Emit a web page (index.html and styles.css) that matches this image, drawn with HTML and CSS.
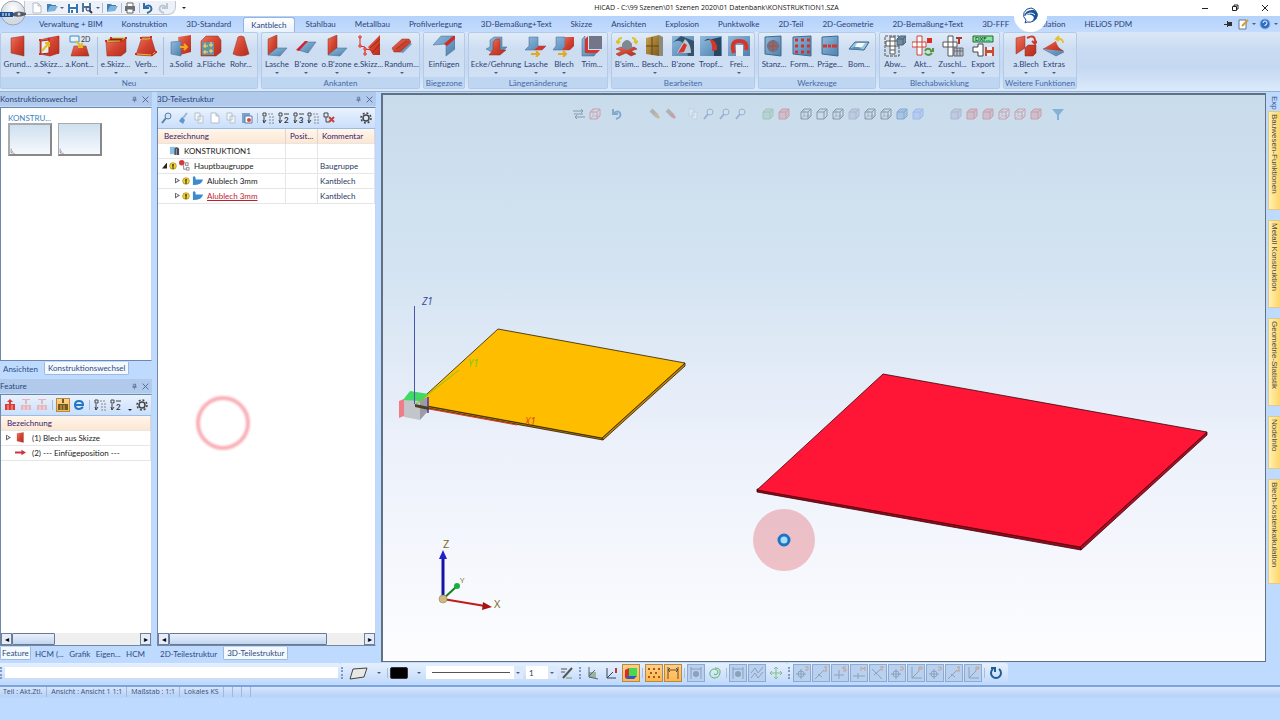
FILE: index.html
```html
<!DOCTYPE html>
<html lang="de">
<head>
<meta charset="utf-8">
<title>HiCAD - C:\99 Szenen\01 Szenen 2020\01 Datenbank\KONSTRUKTION1.SZA</title>
<link rel="stylesheet" href="styles.css">
</head>
<body>
<svg class="defs" aria-hidden="true">
<defs>
<linearGradient id="r" x1="0" y1="0" x2="1" y2="1"><stop offset="0" stop-color="#ee7460"/><stop offset=".5" stop-color="#d24430"/><stop offset="1" stop-color="#b42c1e"/></linearGradient>
<linearGradient id="b" x1="0" y1="0" x2="1" y2="1"><stop offset="0" stop-color="#90bade"/><stop offset="1" stop-color="#4c80ac"/></linearGradient>
<linearGradient id="y" x1="0" y1="0" x2="1" y2="1"><stop offset="0" stop-color="#c9a24c"/><stop offset="1" stop-color="#7d5a1c"/></linearGradient>
</defs>
<symbol id="sheet" viewBox="0 0 22 22"><path fill="url(#r)" stroke="#8d3024" stroke-width=".5" d="M4 3 17 1v20L4 18z"/></symbol>
<symbol id="sketch" viewBox="0 0 22 22"><path fill="url(#r)" stroke="#9c2a1c" stroke-width=".6" d="M2 5 10 3 21 1v17l-9 3-10-2z"/><path fill="#e8edf5" stroke="#a5281a" d="M3 6 11 5v13l-8 1z"/><path stroke="#e3bb23" stroke-width="2" fill="none" d="m4 16 7-8m-4 0h4v4"/><g fill="#e02418"><path d="M1 4h2v2H1zM10 3h2v2h-2zM19 1h2v2h-2zM1 18h2v2H1zM11 19h2v2h-2zM19 17h2v2h-2z"/></g></symbol>
<symbol id="box" viewBox="0 0 22 22"><path fill="#8c2418" d="m1 6 5-3h15l-2 4z"/><path fill="url(#r)" stroke="#8d3024" stroke-width=".5" d="M1 7h15l5-3v13l-5 4H2z"/><path fill="none" stroke="#e3bb23" d="M2 6h14l4-3H6z"/><g fill="#e02418"><path d="M0 5h2v2H0zM5 2h2v2H5zM15 5h2v2h-2zM20 2h2v2h-2z"/></g></symbol>
<symbol id="verb" viewBox="0 0 22 22"><path fill="url(#r)" stroke="#8d3024" stroke-width=".5" d="M7 2h9l5 16-4 3-16-1z"/><path fill="none" stroke="#e3bb23" d="M6 4h8l2-2M2 19l15 1 3-3"/><g fill="#e02418"><path d="M5 2h2v2H5zM15 1h2v2h-2zM0 18h2v2H0zM16 19h2v2h-2zM20 16h2v2h-2z"/></g></symbol>
<symbol id="solid" viewBox="0 0 22 22"><path fill="url(#r)" d="M8 2 21 0v17L10 20z"/><path fill="url(#b)" stroke="#3c6488" stroke-width=".5" d="M1 7 11 6v15L1 19z"/><path stroke="#f0a920" stroke-width="2" fill="none" d="M10 12h6m-2-3 3 3-3 3"/></symbol>
<symbol id="flaeche" viewBox="0 0 22 22"><path fill="url(#r)" stroke="#8d3024" stroke-width=".5" d="M1 6 6 1h12l3 4v12l-5 4H1z"/><path fill="#6893a4" d="M2 7h12v13H2z"/><path stroke="#ffe24a" fill="none" d="M5 8v5M3 11h5m3-4v5M9 10h4m-8 5v4m-2-2h5m3-3v4m-2-2h4"/></symbol>
<symbol id="cone" viewBox="0 0 22 22"><path fill="url(#r)" stroke="#8d3024" stroke-width=".5" d="M8 2q3-2 6 0l5 17q-8 4-16 0z"/></symbol>
<symbol id="lasche" viewBox="0 0 22 22"><path fill="url(#r)" stroke="#8d3024" stroke-width=".5" d="M2 4 11 0v13L2 20z"/><path fill="url(#b)" stroke="#41698c" stroke-width=".5" d="m2 20 9-7h10l-7 8z"/></symbol>
<symbol id="bzone" viewBox="0 0 22 22"><path fill="url(#b)" stroke="#41698c" stroke-width=".5" d="M3 15 11 7h10l-8 11z"/><path fill="#d51f2c" d="M1 15 10 6h3l-9 10z"/></symbol>
<symbol id="eskizz" viewBox="0 0 22 22"><path fill="url(#r)" d="M10 12 22 0v20h-7z"/><path stroke="#8f1c10" stroke-width=".8" d="m12 13 10-9M14 18 22 9"/><path fill="none" stroke="#e02418" d="M2 3v8l5 1v7m0-5 7 1"/><g fill="#fff" stroke="#e02418"><path d="M1 1h2v2H1zM1 10h2v2H1zM6 13h2v2H6zM6 18h2v2H6z"/></g></symbol>
<symbol id="rand" viewBox="0 0 22 22"><path fill="url(#b)" d="M8 17 18 7l3 2-9 9z"/><path fill="url(#r)" stroke="#8d3024" stroke-width=".5" d="M1 13 11 4h7l2 3-11 10H3z"/><path stroke="#8d3024" stroke-width=".8" d="m5 14 11-8"/></symbol>
<symbol id="einf" viewBox="0 0 22 22"><path fill="url(#b)" stroke="#41698c" stroke-width=".5" d="M0 10 8 1h14v13l-9 7V9z"/><path fill="#cf2d28" d="m11 9 9-8h2v3l-8 7z"/></symbol>
<symbol id="ecke" viewBox="0 0 22 22"><path fill="url(#b)" stroke="#41698c" stroke-width=".5" d="M5 5 9 2h8v10h5l-9 8L1 14l4-2z"/><path fill="url(#r)" stroke="#8d3024" stroke-width=".5" d="M8 7l3-3h4v11h6l-6 5H4l4-5z"/></symbol>
<symbol id="lasch2" viewBox="0 0 22 22"><path fill="url(#b)" stroke="#41698c" stroke-width=".5" d="M4 2h9v9h8l-4 4H0l4-4z"/><path fill="#d93429" d="M14 11h7l-4 4h-8z"/><path fill="none" stroke="#e3a91d" stroke-width="2" d="M6 19h8m-3-3 3 3-3 3"/></symbol>
<symbol id="blech2" viewBox="0 0 22 22"><path fill="url(#b)" stroke="#41698c" stroke-width=".5" d="M3 2h9v9h8l-4 4H0l3-4z"/><path fill="url(#r)" d="M12 2h9v9l-4 4H9l3-4z"/><path fill="none" stroke="#e3a91d" stroke-width="2" d="M5 19h8m-3-3 3 3-3 3"/></symbol>
<symbol id="trim" viewBox="0 0 22 22"><path fill="#75758a" d="M8 1h13v13H8z"/><path fill="url(#b)" stroke="#41698c" stroke-width=".5" d="M1 4 4 1v16h12l-3 4H1z"/><path fill="#d93429" d="m4 4 3-3v14h12l-3 3H4z"/></symbol>
<symbol id="bsim" viewBox="0 0 22 22"><path fill="url(#r)" stroke="#8d3024" stroke-width=".5" d="m0 14 5-2 5 2 8-2 3 2-6 2 5 3-5 2-5-3-7 3-3-2 6-3z"/><path fill="#7d8892" d="M6 9q5-8 10 0v4l-5 2-5-2z"/><path fill="none" stroke="#dbc225" stroke-width="2" d="M6 3Q2 3 2 8M0 6l2 2 2-2m12-3q4 0 4 5m-2-2 2 2 2-2"/></symbol>
<symbol id="besch" viewBox="0 0 22 22"><path fill="url(#y)" d="M2 3 15 0v21L2 19z"/><path fill="#8d897b" d="m15 0 4 2v19h-4z"/><path stroke="#67450f" d="M2 11h13M8 2v18"/></symbol>
<symbol id="bz2" viewBox="0 0 22 22"><path fill="url(#b)" d="M0 1h22v20H0z"/><path fill="#31536e" d="M0 8q12-8 16 13h6V6L9 1z"/><path fill="#bac9d3" d="M5 18 13 4q6 5 6 14z"/><path fill="#d93429" d="m6 18 6-10 3 2-3 7z"/></symbol>
<symbol id="tropf" viewBox="0 0 22 22"><path fill="url(#b)" d="M0 1h22v20H0z"/><path fill="#29475f" d="M4 6q7-6 10 4v11h7V2z"/><path fill="#d93429" d="M9 4q9 1 8 11l-5 1q1-7-3-12z"/></symbol>
<symbol id="frei" viewBox="0 0 22 22"><path fill="url(#b)" d="M0 1h22v20H0z"/><path fill="#e9eef3" d="M8 10h7v11H8z"/><path fill="none" stroke="#d93429" stroke-width="4" d="M6 18Q2 6 11 6t7 9"/></symbol>
<symbol id="stanz" viewBox="0 0 22 22"><path fill="url(#b)" stroke="#406b91" d="M2 2 18 1v20L2 19z"/><circle cx="10" cy="11" r="6" fill="#77707d"/><path stroke="#b44c49" d="M4 11h12M10 5v12"/></symbol>
<symbol id="form" viewBox="0 0 22 22"><path fill="url(#b)" stroke="#406b91" d="M2 2 20 1v20L2 19z"/><path stroke="#cf342c" stroke-width="3" stroke-dasharray="3 3" d="M4 5h15M4 11h15M4 17h15"/></symbol>
<symbol id="prae" viewBox="0 0 22 22"><path fill="url(#b)" stroke="#406b91" d="M3 2 19 1v20L3 19z"/><path stroke="#d93429" stroke-width="3" d="M4 11h4m1 0h3m1 0h5"/></symbol>
<symbol id="bom" viewBox="0 0 22 22"><path fill="#9cc6e2" stroke="#35617f" d="m1 14 6-7h14l-5 8z"/><path fill="#5b91b9" d="m1 14 7-3 8 4z"/><path fill="#f2faff" d="M9 8h8l-3 4H7z"/></symbol>
<symbol id="abw" viewBox="0 0 22 22"><path fill="none" stroke="#555" stroke-dasharray="3 1" d="M1 1h14v20H1z"/><path fill="#fff" stroke="#555" d="M6 2h5v4h4v5h-4v8H6v-8H2V6h4zM6 6h5v5H6zm0 9h5"/><path fill="#718ca1" stroke="#48657b" d="m13 4 3-3h6v6l-3 3h-6zm0 0h6v6m0-6 3-3"/></symbol>
<symbol id="akt" viewBox="0 0 22 22"><path fill="#fff" stroke="#ce4039" d="M5 1h5v6h4v5h-4v8H5v-8H0V7h5zM5 7h5v5H5z"/><path fill="#e02c20" d="M15 3h5v5h-5z"/><path fill="none" stroke="#57963c" stroke-width="2" d="M13 16q2-4 6-1m2-2v3h-3m2 2q-4 4-7 0"/></symbol>
<symbol id="zu" viewBox="0 0 22 22"><path fill="#fff" stroke="#555" d="M6 1h5v6h4v5h-4v9H6v-9H1V7h5zM6 7h5v5H6z"/><path stroke="#af3430" stroke-width="2" d="M14 3h6m-3 0v6"/><path fill="#b9c2c6" stroke="#667" d="M12 13h9v8h-9zm0 3h9m-6-3v8m3-8v8"/></symbol>
<symbol id="ablech" viewBox="0 0 22 22"><path fill="url(#r)" stroke="#8d3024" stroke-width=".5" d="M1 3 10 1v12l-9 6zM10 13l3-3h8v8l-3 3h-8z"/><path fill="none" stroke="#cf3d2c" stroke-width="2" d="M12 3q8-4 8 3v2m-3-2 3 3 2-3"/></symbol>
<symbol id="extras" viewBox="0 0 22 22"><path fill="url(#b)" stroke="#41698c" stroke-width=".5" d="m0 14 13 7 8-4-11-7z"/><path fill="url(#r)" d="m0 14 13-8q1 7 8 10-11-1-21-2z"/><path fill="none" stroke="#e5c22d" stroke-width="2" d="M20 8q0-5-6-4m2-3-3 3 3 2"/></symbol>
<symbol id="new" viewBox="0 0 12 12"><path fill="#fff" stroke="#b3bcc9" d="M2 1h5l3 3v7H2zM7 1v3h3"/></symbol>
<symbol id="open" viewBox="0 0 12 12"><path fill="#3f7fb8" d="M1 10V2h4l1 1h4v2z"/><path fill="#7db2dd" d="m1 10 3-6h8L9 9z"/></symbol>
<symbol id="save" viewBox="0 0 12 12"><path fill="#3576b5" d="M1 2h10v9H1z"/><path fill="#fff" d="M3 2h6v3H3zm0 5h6v4H3z"/><path fill="#3576b5" d="M4 8h2v3H4z"/></symbol>
<symbol id="savef" viewBox="0 0 12 12"><path fill="#4a7a9c" d="M1 1h9v9H1z"/><path fill="#fff" d="M3 1h5v3H3zm0 5h5v4H3z"/><circle cx="7" cy="7" r="2" fill="#cfe8f6" stroke="#335"/><path stroke="#335" stroke-width="2" d="m9 9 2 2"/></symbol>
<symbol id="print" viewBox="0 0 12 12"><path fill="#fff" stroke="#666" d="M3 1h6v4H3z"/><path fill="#6b7179" d="M1 4h10v5H1z"/><path fill="#fff" stroke="#666" d="M3 7h6v4H3z"/></symbol>
<symbol id="undo" viewBox="0 0 12 12"><path fill="none" stroke="#2c6da6" stroke-width="2" d="M5 11q6-2 4-6-2-3-6 0M2 1v5h5"/></symbol>
<symbol id="redo" viewBox="0 0 12 12"><path fill="none" stroke="#b9c7d6" stroke-width="2" d="M7 11Q1 9 3 5q2-3 6 0m1-4v5H5"/></symbol>
<symbol id="pin" viewBox="0 0 12 12"><path fill="none" stroke="#47628f" d="M4 2h4v5H4zM7 2v5M2 7h8M6 7v4"/></symbol>
<symbol id="x" viewBox="0 0 12 12"><path stroke="#47628f" stroke-width="1.500" fill="none" d="m1 1 10 10m0-10L1 11"/></symbol>
<symbol id="gear" viewBox="0 0 12 12"><circle cx="6" cy="6" r="3" fill="none" stroke="#444" stroke-width="1.500"/><circle cx="6" cy="6" r="5" fill="none" stroke="#444" stroke-width="1.500" stroke-dasharray="2 1.900"/></symbol>
<symbol id="lens" viewBox="0 0 12 12"><circle cx="7" cy="4" r="3" fill="#cfe2f6" stroke="#5b7ea6"/><path stroke="#5b7ea6" stroke-width="2" d="M5 6 1 11"/></symbol>
<symbol id="brush" viewBox="0 0 12 12"><path stroke="#9db6cf" stroke-width="2" d="m10 1-4 5"/><path fill="#5b98cf" d="m5 5 3 3-2 4-4-3z"/></symbol>
<symbol id="copy" viewBox="0 0 12 12"><path fill="#f4f7fa" stroke="#b6c1cf" d="M2 1h5v7H2zM5 4h5v7H5z"/></symbol>
<symbol id="paste" viewBox="0 0 12 12"><path fill="#7ba3cf" d="M1 1h8v10H1z"/><path fill="#fff" stroke="#6078a0" d="M4 4h7v7H4z"/><circle cx="8" cy="8" r="2" fill="#d14c3e"/></symbol>
<symbol id="tree" viewBox="0 0 12 12"><path fill="none" stroke="#444" d="M1 1h3v3H1zM2 5v6m-1-3 1 3 2-3"/><path stroke="#888" stroke-dasharray="2 1" d="M6 2h5M7 5h5M7 8h5M7 11h5"/></symbol>
<symbol id="treen" viewBox="0 0 12 12"><path fill="none" stroke="#444" d="M1 1h3v3H1zM2 5v6m-1-3 1 3 2-3M6 2h5"/></symbol>
<symbol id="treex" viewBox="0 0 12 12"><path fill="none" stroke="#444" d="M1 1h4v4H1zM3 5v5h3"/><path stroke="#c8423a" stroke-width="2" d="m6 5 5 5m0-5-5 5"/></symbol>
<symbol id="konst" viewBox="0 0 12 12"><path fill="#8ec0e6" d="M1 2h6v8H1z"/><path fill="#434a52" d="M6 4q2-3 5 0v7H6z"/><path stroke="#aab" d="M8 4v7"/></symbol>
<symbol id="warn" viewBox="0 0 12 12"><circle cx="6" cy="6" r="5" fill="#f2d22c" stroke="#a58a17"/><path stroke="#222" stroke-width="2" d="M6 3v4m0 1v2"/></symbol>
<symbol id="asm" viewBox="0 0 12 12"><circle cx="3" cy="3" r="3" fill="#d33a3c"/><path fill="#f4f4f4" stroke="#888" d="M7 3h3v3H7zM8 8h3v3H8zM5 5v5h3"/></symbol>
<symbol id="part" viewBox="0 0 12 12"><path fill="#3d8ad0" d="M1 2q3-2 3 3l8 0q-1 6-11 6z"/></symbol>
<symbol id="ins" viewBox="0 0 12 12"><path fill="#dd3b34" d="M1 5h10v6H1zM5 1h2v4H5z"/><path fill="#dd3b34" d="m3 3 3-3 3 3z"/><path stroke="#fff" stroke-width=".6" d="M4 6v5m4-5v5"/></symbol>
<symbol id="insd" viewBox="0 0 12 12"><path fill="#e6b6bd" d="M1 6h10v5H1zM5 0h2v5H5zM2 0h8v1H2z"/><path stroke="#fff" stroke-width=".6" d="M4 7v4m4-4v4"/></symbol>
<symbol id="insk" viewBox="0 0 12 12"><path fill="#6f5a22" d="M1 5h10v6H1zM5 0h2v4H5z"/><path stroke="#d9b450" d="M4 6v5m3-5v5"/></symbol>
<symbol id="ie" viewBox="0 0 12 12"><path fill="none" stroke="#2475c4" stroke-width="2" d="M2 6h8q0-4-4-4T2 6q0 4 4 4 2 0 4-2"/></symbol>
<symbol id="arrow" viewBox="0 0 12 12"><path fill="#cf3440" d="M0 5h7V3l5 3-5 3V7H0z"/></symbol>
<symbol id="cube" viewBox="0 0 12 12"><path fill="none" stroke="currentColor" d="M1 4h7v7H1zM1 4l3-3h7L8 4M8 11l3-3V1"/></symbol>
<symbol id="cubew" viewBox="0 0 12 12"><path fill="none" stroke="currentColor" d="M1 4h7v7H1zM1 4l3-3h7L8 4M8 11l3-3V1"/><path fill="none" stroke="currentColor" stroke-width=".6" d="M4 1v7l-3 3m3-3h7"/></symbol>
<symbol id="cubef" viewBox="0 0 12 12"><path fill="currentColor" fill-opacity=".45" stroke="currentColor" d="m1 4 3-3h7v7l-3 3H1zM1 4h7v7M8 4l3-3"/></symbol>
<symbol id="swap" viewBox="0 0 12 12"><path fill="none" stroke="currentColor" d="M0 3h10M8 1l2 2-2 2M12 9H2m2-2L2 9l2 2M1 6h9"/></symbol>
<symbol id="pen" viewBox="0 0 12 12"><path stroke="#8c8074" stroke-width="4" d="m2 2 6 6"/><path stroke="currentColor" stroke-width="3" d="m6 6 4 4"/></symbol>
<symbol id="funnel" viewBox="0 0 12 12"><path fill="#2f7ec0" d="M0 1h12L7 7v5H5V7z"/></symbol>
<symbol id="tgt" viewBox="0 0 14 14"><path fill="none" stroke="currentColor" d="M1 8h10M6 3v10"/><circle cx="6" cy="8" r="3" fill="none" stroke="currentColor"/><path stroke="#c3a08f" fill="none" d="M10 1h3v3h-3"/></symbol>
<symbol id="move" viewBox="0 0 14 14"><path fill="none" stroke="currentColor" d="M1 7h12M7 1v12M3 5 1 7l2 2m8-4 2 2-2 2M5 3l2-2 2 2m-4 8 2 2 2-2"/></symbol>
<symbol id="diag" viewBox="0 0 14 14"><path fill="none" stroke="currentColor" d="m1 13 9-9M4 8l4 3"/><path stroke="#c3a08f" fill="none" d="M10 1h3m-1 0v4m-2 0h3"/></symbol>
<symbol id="diag2" viewBox="0 0 14 14"><path fill="none" stroke="currentColor" d="m1 3 10 10M3 9l7-6"/><path stroke="#c3a08f" fill="none" d="M9 1h4m-2 0v4"/></symbol>
<symbol id="plus" viewBox="0 0 14 14"><path fill="none" stroke="currentColor" d="M1 9h10M6 4v9"/><path stroke="#c3a08f" fill="none" d="M13 1h-3v2h3v2h-3"/></symbol>
<symbol id="mid" viewBox="0 0 14 14"><path fill="none" stroke="currentColor" d="M1 10h12M6 7v6"/><path stroke="#c3a08f" fill="none" d="M9 5V1l2 2 2-2v4"/></symbol>
<symbol id="axis" viewBox="0 0 14 14"><path fill="none" stroke="currentColor" d="M3 1v11h10M3 12l7-7"/><path stroke="#c3a08f" fill="none" d="M10 5V1h3v2h-3"/></symbol>
<symbol id="zig" viewBox="0 0 14 14"><path fill="none" stroke="currentColor" d="m1 7 4-5 3 5 5-6M1 12l4-5 3 5 5-6"/></symbol>
<symbol id="dim" viewBox="0 0 14 14"><path fill="none" stroke="currentColor" d="M2 1v12M12 1v12M2 4h10M4 2 2 4l2 2m6-4 2 2-2 2"/></symbol>
<symbol id="dimc" viewBox="0 0 14 14"><path fill="none" stroke="currentColor" d="M2 1v12M12 1v12M2 3h10"/><circle cx="7" cy="8" r="3" fill="currentColor"/></symbol>
<symbol id="swirl" viewBox="0 0 14 14"><path fill="none" stroke="#62b36c" d="M7 2q6 0 5 5-1 5-6 5-5-1-4-6 2-4 5-3 4 1 3 4-2 3-4 1"/></symbol>
<symbol id="triad" viewBox="0 0 10 10"><path stroke="#3a62c8" d="M2 1v7"/><path stroke="#c85a4a" d="m2 8 6 1"/><path stroke="#4fae5a" d="m2 8 3-3"/></symbol>
</svg>

<header class="titlebar">
  <div class="quick">
    <button aria-label="Neu"><svg><use href="#new"/></svg></button>
    <button aria-label="Öffnen"><svg><use href="#open"/></svg></button><i class="dd"></i>
    <button aria-label="Speichern"><svg><use href="#save"/></svg></button>
    <button aria-label="Speichern unter"><svg><use href="#savef"/></svg></button><i class="dd"></i>
    <i class="vsep"></i>
    <button aria-label="Ordner"><svg><use href="#open"/></svg></button>
    <i class="vsep"></i>
    <button aria-label="Drucken"><svg><use href="#print"/></svg></button>
    <i class="vsep"></i>
    <button aria-label="Rückgängig"><svg><use href="#undo"/></svg></button>
    <button aria-label="Wiederholen"><svg><use href="#redo"/></svg></button>
  </div>
  <i class="dd more"></i>
  <h1>HiCAD - C:\99 Szenen\01 Szenen 2020\01 Datenbank\KONSTRUKTION1.SZA</h1>
  <div class="winbtns">
    <button aria-label="Minimieren"><svg viewBox="0 0 12 12"><path stroke="#222" d="M3 6.500h6"/></svg></button>
    <button aria-label="Wiederherstellen"><svg viewBox="0 0 12 12"><path fill="none" stroke="#222" d="M3.500 4.500h4v4h-4zM5 4V3h4v4H8"/></svg></button>
    <button aria-label="Schließen"><svg viewBox="0 0 12 12"><path stroke="#222" d="m3 3 6 6m0-6-6 6"/></svg></button>
  </div>
</header>
<button class="orb" aria-label="HiCAD Menü"><svg viewBox="0 0 30 28"><defs><radialGradient id="orbg" cy=".3"><stop offset="0" stop-color="#fff"/><stop offset="1" stop-color="#d5dae2"/></radialGradient></defs><circle cx="13" cy="13" r="12" fill="url(#orbg)" stroke="#9aa5b5"/><path fill="#1d4f95" d="M0 12h13v5H0z"/><path stroke="#fff" d="M3 13v3m3-3v3m3-3v3"/><path fill="#555c66" d="M13 13q5-3 13 0v2q-7 3-13 1z"/><circle cx="19" cy="14" r="1.500" fill="#ddd"/></svg></button>
<div class="bubble"><svg viewBox="0 0 18 18"><path fill="#fff" stroke="#1a4b8c" d="M9 1a8 7 0 1 1-4 14l-2 1 1-3A8 7 0 0 1 9 1z"/><path fill="#19529b" d="M2 9q2-7 10-6 5 3 3 7-1 3-5 4 3-3 1-5-3-3-9 0z"/><path stroke="#fff" fill="none" d="M4 8q5-4 9 0"/></svg></div>

<nav class="tabs">
  <div class="tablist">
  <button>Verwaltung + BIM</button><button>Konstruktion</button><button>3D-Standard</button><button class="on">Kantblech</button><button>Stahlbau</button><button>Metallbau</button><button>Profilverlegung</button><button>3D-Bemaßung+Text</button><button>Skizze</button><button>Ansichten</button><button>Explosion</button><button>Punktwolke</button><button>2D-Teil</button><button>2D-Geometrie</button><button>2D-Bemaßung+Text</button><button>3D-FFF</button><button>Simulation</button><button>HELiOS PDM</button>
  </div>
  <div class="tabtools">
    <button aria-label="Anheften"><svg viewBox="0 0 12 12"><path fill="#333" d="M2 6h3V3h1v1h4v4H6v1H5V7H2z"/></svg></button>
    <button aria-label="Bearbeiten"><svg viewBox="0 0 12 12"><path fill="#fff" stroke="#678" d="M2 2h7v9H2z"/><path stroke="#d49a35" stroke-width="2" d="m5 8 6-6"/></svg></button><i class="dd"></i>
    <button aria-label="Hilfe"><svg viewBox="0 0 12 12"><circle cx="6" cy="6" r="5" fill="#2f6fc4" stroke="#8fb4e4"/><path fill="none" stroke="#fff" d="M4 5q0-2 2-2t2 2-2 2v1"/></svg></button><i class="dd"></i>
  </div>
</nav>

<section class="ribbon">
  <div class="group"><div class="btns">
    <button class="w31 d"><svg><use href="#sheet"/></svg>Grund...</button>
    <button class="w31 d"><svg><use href="#sketch"/></svg>a.Skizz...</button>
    <button class="w31"><svg viewBox="0 0 22 22"><path fill="#e7f3fc" stroke="#3a8cc4" d="M1 1h9v6H1z"/><path fill="url(#r)" stroke="#8d3024" stroke-width=".5" d="M5 11h12l3 10H2z"/><path stroke="#e3bb23" stroke-width="2" fill="none" d="m7 6 6 6m0-4v4H9"/><text x="12" y="7" font-size="7" fill="#333">2D</text></svg>a.Kont...</button><i class="gsep"></i>
    <button class="w31 d"><svg><use href="#box"/></svg>e.Skizz...</button>
    <button class="w30 d"><svg><use href="#verb"/></svg>Verb...</button><i class="gsep"></i>
    <button class="w30"><svg><use href="#solid"/></svg>a.Solid</button>
    <button class="w30"><svg><use href="#flaeche"/></svg>a.Fläche</button>
    <button class="w30"><svg><use href="#cone"/></svg>Rohr...</button>
  </div><h2>Neu</h2></div>
  <div class="group"><div class="btns">
    <button class="w28 d"><svg><use href="#lasche"/></svg>Lasche</button>
    <button class="w30 d"><svg><use href="#bzone"/></svg>B'zone</button>
    <button class="w31 d"><svg><use href="#lasche"/></svg>o.B'zone</button>
    <button class="w33 d"><svg><use href="#eskizz"/></svg>e.Skizz...</button>
    <button class="w33 d"><svg><use href="#rand"/></svg>Randum...</button>
  </div><h2>Ankanten</h2></div>
  <div class="group"><div class="btns">
    <button class="w38"><svg><use href="#einf"/></svg>Einfügen</button>
  </div><h2>Biegezone</h2></div>
  <div class="group"><div class="btns">
    <button class="w52 d"><svg><use href="#ecke"/></svg>Ecke/Gehrung</button>
    <button class="w28 d"><svg><use href="#lasch2"/></svg>Lasche</button>
    <button class="w28 d"><svg><use href="#blech2"/></svg>Blech</button>
    <button class="w28"><svg><use href="#trim"/></svg>Trim...</button>
  </div><h2>Längenänderung</h2></div>
  <div class="group"><div class="btns">
    <button class="w28"><svg><use href="#bsim"/></svg>B'sim...</button>
    <button class="w28 d"><svg><use href="#besch"/></svg>Besch...</button>
    <button class="w28"><svg><use href="#bz2"/></svg>B'zone</button>
    <button class="w28"><svg><use href="#tropf"/></svg>Tropf...</button>
    <button class="w28 d"><svg><use href="#frei"/></svg>Frei...</button>
  </div><h2>Bearbeiten</h2></div>
  <div class="group"><div class="btns">
    <button class="w28"><svg><use href="#stanz"/></svg>Stanz...</button>
    <button class="w28"><svg><use href="#form"/></svg>Form...</button>
    <button class="w28"><svg><use href="#prae"/></svg>Präge...</button>
    <button class="w30"><svg><use href="#bom"/></svg>Bom...</button>
  </div><h2>Werkzeuge</h2></div>
  <div class="group"><div class="btns">
    <button class="w28 d"><svg><use href="#abw"/></svg>Abw...</button>
    <button class="w28 d"><svg><use href="#akt"/></svg>Akt...</button>
    <button class="w31 d"><svg><use href="#zu"/></svg>Zuschl...</button>
    <button class="w30 d"><svg viewBox="0 0 22 22"><path fill="#82e99a" stroke="#25653b" d="M1 1h20v6H1z"/><text x="3" y="6" font-size="6" fill="#123">DXF...</text><path fill="#fff" stroke="#444" d="M6 9h5v12H6v-4H1v-5h5z"/><path fill="#c84d34" d="M13 12h9v9h-9z"/><path fill="#eee" d="M15 12h5v3h-5zm0 6h5v3h-5z"/></svg>Export</button>
  </div><h2>Blechabwicklung</h2></div>
  <div class="group"><div class="btns mid">
    <button class="w28 d"><svg><use href="#ablech"/></svg>a.Blech</button>
    <button class="w28 d"><svg><use href="#extras"/></svg>Extras</button>
  </div><h2>Weitere Funktionen</h2></div>
</section>

<main class="work">
  <div class="left">
    <section class="dock first">
      <header><h3>Konstruktionswechsel</h3><button aria-label="Anheften"><svg><use href="#pin"/></svg></button><button aria-label="Schließen"><svg><use href="#x"/></svg></button></header>
      <div class="pane thumbs">
        <button class="thumb"><span>KONSTRU...</span><i><svg><use href="#triad"/></svg></i></button>
        <button class="thumb"><span>&nbsp;</span><i class="second"><svg><use href="#triad"/></svg></i></button>
      </div>
      <div class="docktabs"><button>Ansichten</button><button class="on">Konstruktionswechsel</button></div>
    </section>
    <section class="dock feature">
      <header><h3>Feature</h3><button aria-label="Anheften"><svg><use href="#pin"/></svg></button><button aria-label="Schließen"><svg><use href="#x"/></svg></button></header>
      <div class="pane">
        <div class="tools wide">
          <button aria-label="Einfügen"><svg><use href="#ins"/></svg></button><button aria-label="Davor"><svg><use href="#insd"/></svg></button><button aria-label="Danach"><svg><use href="#insd"/></svg></button><i class="vsep"></i><button class="hot" aria-label="Feature"><svg><use href="#insk"/></svg></button><button aria-label="Editor"><svg><use href="#ie"/></svg></button><i class="vsep"></i><button aria-label="Ebenen"><svg><use href="#tree"/></svg></button><button class="lv" aria-label="Ebene 2"><svg><use href="#treen"/></svg><b>2</b></button><i class="dd low"></i><button class="end" aria-label="Optionen"><svg><use href="#gear"/></svg></button>
        </div>
        <table class="feat">
          <thead><tr><th>Bezeichnung</th></tr></thead>
          <tbody>
            <tr><td><span class="cell"><i class="tri"></i><svg><use href="#sheet"/></svg>(1) Blech aus Skizze</span></td></tr>
            <tr><td><span class="cell"><i class="tri none"></i><svg><use href="#arrow"/></svg>(2) --- Einfügeposition ---</span></td></tr>
          </tbody>
        </table>
        <div class="scroll"><button aria-label="Links">◂</button><i class="knob short"></i><button aria-label="Rechts">▸</button></div>
      </div>
      <div class="docktabs many"><button class="on">Feature</button><button>HCM (...</button><button>Grafik</button><button>Eigen...</button><button>HCM</button></div>
    </section>
  </div>
  <section class="dock parts">
    <header><h3>3D-Teilestruktur</h3><button aria-label="Anheften"><svg><use href="#pin"/></svg></button><button aria-label="Schließen"><svg><use href="#x"/></svg></button></header>
    <div class="pane">
      <div class="tools">
        <button aria-label="Suchen"><svg><use href="#lens"/></svg></button><button aria-label="Pinsel"><svg><use href="#brush"/></svg></button><button aria-label="Kopieren"><svg><use href="#copy"/></svg></button><button aria-label="Ausschneiden"><svg><use href="#new"/></svg></button><button aria-label="Duplizieren"><svg><use href="#copy"/></svg></button><button aria-label="Einfügen"><svg><use href="#paste"/></svg></button><i class="vsep"></i><button aria-label="Ebenen"><svg><use href="#tree"/></svg></button><button class="lv" aria-label="Ebene 2"><svg><use href="#treen"/></svg><b>2</b></button><button class="lv" aria-label="Ebene 3"><svg><use href="#treen"/></svg><b>3</b></button><button aria-label="Alle"><svg><use href="#tree"/></svg></button><button aria-label="Entfernen"><svg><use href="#treex"/></svg></button><button class="end" aria-label="Optionen"><svg><use href="#gear"/></svg></button>
      </div>
      <table>
        <colgroup><col><col class="c2"><col class="c3"></colgroup>
        <thead><tr><th>Bezeichnung</th><th>Posit...</th><th>Kommentar</th></tr></thead>
        <tbody>
          <tr><td><span class="cell l1"><svg><use href="#konst"/></svg>KONSTRUKTION1</span></td><td></td><td></td></tr>
          <tr><td><span class="cell l2"><i class="tri open"></i><svg class="s"><use href="#warn"/></svg><svg><use href="#asm"/></svg>Hauptbaugruppe</span></td><td></td><td>Baugruppe</td></tr>
          <tr><td><span class="cell l3"><i class="tri"></i><svg class="s"><use href="#warn"/></svg><svg><use href="#part"/></svg>Alublech 3mm</span></td><td></td><td>Kantblech</td></tr>
          <tr><td><span class="cell l3"><i class="tri"></i><svg class="s"><use href="#warn"/></svg><svg><use href="#part"/></svg><a href="#">Alublech 3mm</a></span></td><td></td><td>Kantblech</td></tr>
        </tbody>
      </table>
      <i class="ring"></i>
      <div class="scroll"><button aria-label="Links">◂</button><i class="knob"></i><button aria-label="Rechts">▸</button></div>
    </div>
    <div class="docktabs"><button>2D-Teilestruktur</button><button class="on">3D-Teilestruktur</button></div>
  </section>

  <section class="view">
    <svg class="scene" viewBox="383 95 882 565" preserveAspectRatio="xMinYMin meet">
      <g stroke="#2b1c00" stroke-linejoin="round" stroke-width=".8">
        <path fill="#a87404" d="m416 404 187 34v2l-187-34z"/><path fill="#c28405" d="m602 438 83-75v3l-82 74z"/>
        <path fill="#ffbd00" d="m498 329 187 34-83 75-186-34z"/>
      </g>
      <path stroke="#e0341a" d="m429 409 88 16"/>
      <g stroke="#3a0008" stroke-linejoin="round" stroke-width=".8">
        <path fill="#98081c" d="m757 489 324 58v3l-324-58z"/><path fill="#b00c24" d="m1080 547 127-115v3l-126 115z"/>
        <path fill="#ff1636" d="m883 374 324 58-127 115-323-57z"/>
      </g>
      <path fill="#f2565f" fill-opacity=".75" d="m399 401 5-2v17l-5 2z"/><path fill="#c4c5ca" d="M404 400h16v20l-16-3z"/><path fill="#9b9ca4" d="m420 400 8-3v14l-8 9z"/><path fill="#40d965" d="m403 400 7-9 19 3-8 7z"/><path fill="#4a3cae" fill-opacity=".8" d="M427 397h2v16h-2z"/><path fill="#4b3f20" d="m415 404 14 3v3l-14-3z"/>
      <path stroke="#80c813" d="m416 404 43-34"/><path stroke="#4a55b0" d="M414.500 306v98"/>
      <g class="axis1"><text x="422" y="305" fill="#3a459c">Z1</text><text x="468" y="367" fill="#6fcf10">Y1</text><text x="525" y="425" fill="#e0401a">X1</text></g>
      <path stroke="#1514a8" stroke-width="3" d="M443 599v-42"/><path fill="#2320c8" d="m439 559 4-9 4 9z"/>
      <path stroke="#128024" stroke-width="2" d="m443 599 13-12"/><circle cx="457" cy="586" r="3" fill="#17b03a"/>
      <path stroke="#c01c1c" stroke-width="2" d="m443 599 42 7"/><path fill="#a81414" d="m483 602 9 5-10 3z"/><circle cx="443" cy="599" r="4" fill="#cdbb80" stroke="#8d7c48" stroke-width=".5"/>
      <g fill="#7a6a14"><text x="443" y="548" font-size="11">Z</text><text x="460" y="583" font-size="8">Y</text><text x="494" y="608" font-size="11">X</text></g>
      <circle cx="784" cy="540" r="31" fill="#e2757f" fill-opacity=".42"/><circle cx="784" cy="540" r="5" fill="#a9dcf8" stroke="#1b74c8" stroke-width="3"/>
    </svg>
    <div class="viewtools">
      <button class="dk"><svg><use href="#swap"/></svg></button><button class="rd"><svg><use href="#cubew"/></svg></button><i></i><button><svg><use href="#undo"/></svg></button><i class="big"></i>
      <button class="or"><svg><use href="#pen"/></svg></button><button class="rd"><svg><use href="#pen"/></svg></button><i></i><button><svg><use href="#copy"/></svg></button><button><svg><use href="#lens"/></svg></button><button><svg><use href="#lens"/></svg></button><button><svg><use href="#lens"/></svg></button><i class="mid"></i>
      <button class="gn"><svg><use href="#cubef"/></svg></button><button class="rd"><svg><use href="#cubef"/></svg></button><i></i>
      <button class="dk"><svg><use href="#cubew"/></svg></button><button class="dk"><svg><use href="#cube"/></svg></button><button class="dk"><svg><use href="#cubew"/></svg></button><button class="pu"><svg><use href="#cubef"/></svg></button><button class="dk"><svg><use href="#cubew"/></svg></button><button class="dk"><svg><use href="#cubew"/></svg></button><button class="bl"><svg><use href="#cubef"/></svg></button><button class="vi"><svg><use href="#cubef"/></svg></button><i class="big"></i>
      <button class="pu"><svg><use href="#cubef"/></svg></button><button class="rd"><svg><use href="#cubef"/></svg></button><button class="rd"><svg><use href="#cubef"/></svg></button><button class="rd"><svg><use href="#cubew"/></svg></button><button class="rd"><svg><use href="#cubew"/></svg></button><button class="rd"><svg><use href="#cubef"/></svg></button><i></i><button><svg><use href="#funnel"/></svg></button>
    </div>
  </section>
  <nav class="side"><button class="plain">Exp</button><button>Bauwesen-Funktionen</button><button>Metall Konstruktion</button><button>Geometrie-Statistik</button><button>NodeInfo</button><button>Blech-Kostenkalkulation</button></nav>
</main>

<section class="bottom">
  <div class="bar"><i class="grip"></i><input class="cmd" type="text" aria-label="Befehl"></div>
  <div class="bar">
    <i class="grip"></i><button class="wide" aria-label="Ebene"><svg viewBox="0 0 22 14"><path fill="#e8e9e4" stroke="#444" d="m6 3 14-1-3 9-14 2z"/></svg></button><i class="dd"></i><i class="vsep"></i>
    <button class="black" aria-label="Farbe"></button><i class="dd"></i>
    <span class="pick"><select class="line" aria-label="Linienart"><option></option></select></span><span class="pick"><select class="num" aria-label="Linienstärke"><option>1</option></select></span>
    <button aria-label="Stil"><svg viewBox="0 0 14 14"><path stroke="#555" d="M1 3h6M1 6h4"/><path stroke="#555" stroke-width="2" d="M3 12 12 2"/><path stroke="#5f9b60" d="M6 12h6"/></svg></button>
  </div>
  <div class="bar">
    <i class="grip"></i>
    <button aria-label="Koordinatensystem"><svg viewBox="0 0 14 14"><path fill="#9bb39d" d="M3 6h7v6H3z"/><path fill="none" stroke="#567" d="M3 1v10l9 2M3 10l6-6"/></svg></button>
    <button aria-label="Achsen"><svg viewBox="0 0 14 14"><path fill="none" stroke="#345" d="M2 2v10h9M2 12l6-6"/><path stroke="#c33" stroke-width="2" d="M11 2v5"/></svg></button>
    <button class="hot" aria-label="Schattiert"><svg viewBox="0 0 14 14"><path fill="#47d852" d="M5 2h8v8H5z"/><path fill="#d92b2b" d="m1 4 4-2v9l-4 1z"/><path fill="#3155d3" d="m1 12 4-2h8l-3 3H3z"/></svg></button><i class="vsep"></i>
    <button class="hot" aria-label="Punkte"><svg viewBox="0 0 14 14"><path stroke="#a45a13" stroke-width="2" stroke-dasharray="2 3" d="M1 3h12M3 7h10M1 11h12"/></svg></button><button class="hot" aria-label="Bemaßung"><svg><use href="#dim"/></svg></button><i class="vsep"></i>
    <button class="off"><svg><use href="#dimc"/></svg></button><button><svg><use href="#swirl"/></svg></button><i class="vsep"></i>
    <button class="off"><svg><use href="#dimc"/></svg></button><button class="off"><svg><use href="#zig"/></svg></button><button class="grn"><svg><use href="#move"/></svg></button>
  </div>
  <div class="bar">
    <i class="grip"></i>
    <button class="off"><svg><use href="#tgt"/></svg></button><button class="off"><svg><use href="#diag"/></svg></button><button class="off"><svg><use href="#plus"/></svg></button><button class="off"><svg><use href="#mid"/></svg></button><button class="off"><svg><use href="#diag2"/></svg></button><button class="off"><svg><use href="#tgt"/></svg></button><button class="off"><svg><use href="#axis"/></svg></button><button class="off"><svg><use href="#tgt"/></svg></button><button class="off"><svg><use href="#diag"/></svg></button><button class="off"><svg><use href="#axis"/></svg></button><i class="vsep"></i>
    <button aria-label="Aktualisieren"><svg viewBox="0 0 14 14"><path fill="none" stroke="#1d5e96" stroke-width="2" d="M4 3a5 5 0 1 0 6 0M2 2h4v4"/></svg></button>
  </div>
</section>
<footer class="status"><span>Teil : Akt.Ztl.</span><span>Ansicht : Ansicht 1 1:1</span><span>Maßstab : 1:1</span><span>Lokales KS</span><span></span><span></span><span></span></footer>
</body>
</html>
```
FILE: styles.css
```css
* { box-sizing: border-box; }
html, body { height: 100%; }
body {
  margin: 0; position: relative; display: flex; flex-direction: column; overflow: hidden;
  background: #bfdaff; color: #243a66;
  font-family: Lato, "Open Sans", sans-serif; font-size: 8px; line-height: 10px;
}
button, input, select { font: inherit; color: inherit; margin: 0; padding: 0; border: 0; background: none; }
h1, h2, h3 { margin: 0; font-size: inherit; font-weight: 400; }
svg { display: block; }
.defs { position: absolute; width: 0; height: 0; }
button svg { width: 12px; height: 12px; }
.dd { border: 2px solid transparent; border-top-color: #4a5f86; border-bottom: 0; flex: none; width: 4px; height: 2px; }
.vsep { flex: none; width: 1px; height: 10px; background: #a9bdd8; }

.titlebar { display: flex; align-items: center; height: 16px; background: #fff; flex: none; }
.quick { display: flex; align-items: center; justify-content: space-between; width: 152px; height: 14px; margin-left: 24px; padding: 0 6px; border: 1px solid #c0c8d4; border-top: 0; border-radius: 0 0 8px 0; background: #eef2f8; }
.more { margin-left: 6px; border-top-color: #222; }
.titlebar h1 { flex: 1; text-align: center; color: #111; padding-left: 48px; font-family: "Open Sans", sans-serif; font-size: 7px; }
.winbtns { display: flex; gap: 18px; padding-right: 9px; }
.orb { position: absolute; left: 0; top: 0; z-index: 3; }
.orb svg { width: 30px; height: 28px; }
.bubble { position: absolute; left: 1014px; top: 0; z-index: 3; width: 33px; height: 32px; border-radius: 0 0 16px 16px; background: #fff; display: grid; place-items: center; }
.bubble svg { width: 18px; height: 18px; }

.tabs { display: flex; justify-content: space-between; height: 16px; flex: none; background: linear-gradient(#b4d2fb, #c4dcfd); }
.tablist { display: flex; padding-left: 30px; }
.tablist button { padding: 0 10px 0 9px; color: #2c4478; white-space: nowrap; }
.tablist .on { background: linear-gradient(#fff, #e9f2fd); border: 1px solid #97b4dc; border-bottom: 0; border-radius: 3px 3px 0 0; margin: 1px 2px 0; padding: 0 7px; }
.tabtools { display: flex; align-items: center; gap: 3px; padding-right: 2px; }

.ribbon { display: flex; gap: 3px; height: 60px; padding: 0 0 2px; flex: none; background: linear-gradient(#dbe7f7, #c9dbf2 30%, #c4d8f1 60%, #dceafb); border-bottom: 1px solid #8fb2d6; }
.group { border: 1px solid #b3cbe8; border-radius: 2px; display: flex; flex-direction: column; background: linear-gradient(#e2ecf8, #ccdcf1 30%, #d3e2f5); }
.group h2 { height: 11px; line-height: 12px; text-align: center; color: #4568a6; background: #bfd6f2; }
.btns { display: flex; flex: 1; padding: 2px 1px 0; }
.btns.mid { justify-content: center; }
.group:last-child { min-width: 74px; }
.btns button { position: relative; display: flex; flex-direction: column; align-items: center; gap: 2px; white-space: nowrap; color: #2b4374; }
.btns svg { width: 22px; height: 22px; }
.d::after { content: ""; border: 2px solid transparent; border-top-color: #4a5f86; border-bottom: 0; margin-top: 1px; }
.w28 { width: 28px; } .w30 { width: 30px; } .w31 { width: 31px; } .w33 { width: 33px; } .w38 { width: 38px; } .w52 { width: 52px; }
.gsep { width: 1px; margin: 2px 2px; background: #a9c1e0; }

.work { display: flex; flex: 1; min-height: 0; }
.left { width: 152px; display: flex; flex-direction: column; gap: 4px; margin-right: 5px; }
.dock { display: flex; flex-direction: column; }
.left .dock { flex: 1 1 0; }
.first .docktabs { height: 14px; }
.dock header { display: flex; align-items: center; height: 14px; padding-right: 1px; background: #b1caec; color: #27457c; }
.dock header h3 { flex: 1; }
.dock header svg { width: 7px; height: 7px; margin: 0 2px; }
.pane { flex: 1; min-height: 0; margin-top: 1px; border: 1px solid #6f88a8; border-right-color: #c4d6ee; background: #fff; position: relative; display: flex; flex-direction: column; }
.thumbs { flex-direction: row; gap: 6px; padding: 5px 7px; align-items: flex-start; }
.thumb { width: 44px; text-align: left; color: #3a84b8; }
.thumb span { display: block; white-space: nowrap; line-height: 10px; }
.thumb i { display: flex; align-items: flex-end; height: 33px; border: 2px solid #aaa; border-right-color: #888; border-bottom-color: #888; background: linear-gradient(#cfe0f0, #f6f9fd); }
.thumb svg { width: 6px; height: 6px; }
.thumb .second { border-width: 1px 2px 2px 1px; }
.docktabs { display: flex; align-items: flex-start; height: 16px; padding: 1px 0 0; color: #2f4c80; }
.docktabs button { padding: 0 3px; height: 13px; white-space: nowrap; }
.docktabs button + .on { margin-left: 3px; }
.docktabs .on { background: #f4f9ff; border: 1px solid #9db9df; border-top: 0; border-radius: 0 0 2px 2px; }
.many { justify-content: space-between; padding-right: 6px; }
.many button { padding: 0 1px; }

.tools { display: flex; align-items: center; gap: 4px; height: 21px; padding: 0 3px; flex: none; background: linear-gradient(#e9f2fe, #cadffb); border-bottom: 1px solid #9cbce6; }
.tools .end { margin-left: auto; }
.lv { display: flex; align-items: flex-end; }
.lv b { margin-left: -6px; line-height: 7px; color: #333; }
.hot { background: linear-gradient(#ffd08a, #ffb64c); outline: 1px solid #b58a46; }
.tools .low { margin: 10px 0 0 3px; border-top-color: #222; }
table { border-collapse: collapse; width: 100%; table-layout: fixed; }
th { height: 14px; padding: 0 6px; font-weight: 400; text-align: left; color: #35186e; background: linear-gradient(#fff6ec, #fde6d1); border-right: 1px solid #ddd6d0; }
th + th { padding: 0 4px; }
td { height: 15px; padding: 0 2px; border: 1px solid #e6e6e6; border-left: 0; color: #2a3a63; }
.c2 { width: 32px; } .c3 { width: 57px; }
.cell { display: flex; align-items: center; gap: 2px; color: #1a1a1a; white-space: nowrap; }
.cell svg { width: 11px; height: 11px; margin-right: 2px; flex: none; }
.cell svg.s { width: 8px; height: 8px; margin: 0; }
.cell a { color: #c0202c; }
.l1 { padding-left: 9px; } .l2 { padding-left: 2px; } .l3 { padding-left: 15px; }
.tri { width: 5px; height: 6px; background: #667; clip-path: polygon(0 0, 100% 50%, 0 100%, 0 80%, 60% 50%, 20% 20%, 20% 80%, 0 100%); }
.tri.open { background: #222; clip-path: polygon(100% 0, 100% 100%, 0 100%); }
.tri.none { visibility: hidden; }
.feat td { padding-left: 5px; }
.feat .cell { gap: 4px; }
.scroll { margin-top: auto; display: flex; height: 12px; background: #efefef; }
.scroll button { width: 11px; border: 1px solid #70809a; background: #e4edf9; color: #000; line-height: 8px; }
.scroll button:last-child { margin-left: auto; }
.knob { width: 73%; border: 1px solid #6a7890; border-radius: 1px; background: linear-gradient(#e8f1fc, #c2d6f0); }
.knob.short { width: 43px; }
.parts { width: 219px; margin-right: 5px; }
.ring { position: absolute; left: 38px; top: 288px; width: 54px; height: 54px; border: 4px solid #f9aeb6; border-radius: 50%; filter: blur(1px); }

.view { position: relative; flex: 1; min-width: 0; margin-top: 1px; border: 2px solid #63707f; border-right-width: 1px; border-bottom-width: 1px; background: linear-gradient(#c9dcec, #d3e3f1 30%, #ebf0fa 60%, #fdfdff); overflow: hidden; }
.scene { width: 100%; height: auto; font-family: "Open Sans", sans-serif; }
.axis1 { font-size: 10px; font-style: italic; }
.viewtools { position: absolute; inset: 13px 12px auto 0; display: flex; gap: 4px; justify-content: center; opacity: .45; }
.viewtools i { width: 2px; } .viewtools .big { width: 18px; } .viewtools .mid { width: 7px; }
.dk { color: #33475c; } .rd { color: #cf5058; } .gn { color: #6faa78; } .or { color: #c08a48; } .pu { color: #8c86ac; } .bl { color: #2c66b4; } .vi { color: #6c8cf0; }
.side { width: 14px; padding: 4px 0 0 2px; display: flex; flex-direction: column; gap: 10px; font-family: "Liberation Sans", sans-serif; font-size: 8px; }
.side button { writing-mode: vertical-rl; padding: 2px 0 16px; background: linear-gradient(90deg, #fff0b4, #ffd667); color: #4c4a44; white-space: nowrap; border: 1px solid #e0c98c; border-right: 0; line-height: 12px; }
.side .plain { background: none; padding: 0; border: 0; color: #35558c; margin-bottom: -9px; }

.bottom { display: flex; height: 25px; padding: 1px 0 3px; flex: none; border-bottom: 2px solid #7ba4dc; }
.bar { display: flex; align-items: center; gap: 1px; padding-right: 3px; background: linear-gradient(#e6f0fe, #c5dbfa); border-radius: 0 3px 3px 0; }
.grip { width: 2px; height: 12px; margin: 0 2px 0 0; border-left: 2px dotted #7f9cc8; }
.cmd { width: 333px; height: 11px; background: #fff; }
.bar button { width: 18px; height: 18px; display: grid; place-items: center; }
.bar svg { width: 14px; height: 14px; }
.bar .wide { width: 24px; } .bar .wide svg { width: 22px; }
.bar .black { height: 12px; background: #000; border: 1px solid #334; border-radius: 2px; margin: 0 2px 0 0; }
.bar .dd { margin: 0 4px 0 6px; }
.bar .vsep { margin: 0 1px; }
.bar .hot { outline-offset: -1px; color: #6a4a28; }
.bar .off { background: #b9d1ef; border: 1px solid #8dabd2; color: #8aa1bc; }
.grn { color: #84bf8c; }
.pick { position: relative; display: flex; }
.pick::after { content: ""; position: absolute; right: 3px; top: 6px; border: 2px solid transparent; border-top-color: #4a5f86; border-bottom: 0; pointer-events: none; }
select { appearance: none; height: 13px; border-radius: 0; background: #fff; }
.line { width: 97px; background: linear-gradient(#555, #555) 6px 6px / 78px 1px no-repeat, linear-gradient(#dce9fb, #dce9fb) right / 9px 100% no-repeat, #fff; }
.num { width: 31px; margin-left: 2px; padding-left: 3px; background: linear-gradient(#dce9fb, #dce9fb) right / 9px 100% no-repeat, #fff; }

.status { display: flex; height: 33px; flex: none; padding-left: 3px; color: #35517f; background: linear-gradient(#d8e6fb, #b8d3f8 9px, #bfdaff 12px); font-family: "Open Sans", sans-serif; font-size: 7px; }
.status span { height: 10px; padding-right: 4px; margin-right: 4px; border-right: 1px solid #9fb8dc; }
```
